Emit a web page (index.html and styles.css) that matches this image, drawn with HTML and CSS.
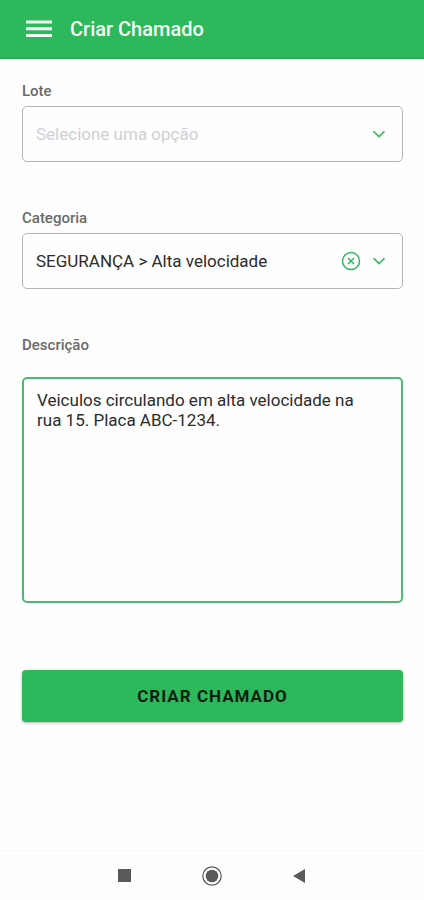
FILE: index.html
```html
<!DOCTYPE html>
<html lang="pt-BR">
<head>
    <meta charset="UTF-8">
    <meta name="viewport" content="width=device-width, initial-scale=1.0">
    <title>Criar Chamado</title>
    <link rel="stylesheet" href="styles.css">
</head>
<body>
    <header class="header">
        <button class="menu-button" type="button" aria-label="Menu">
            <svg width="26" height="18" viewBox="0 0 26 18" fill="currentColor">
                <path d="M0 0.5h26v3H0zM0 7.2h26v3H0zM0 14h26v3H0z"/>
            </svg>
        </button>
        <h1>Criar Chamado</h1>
    </header>

    <main class="content">
        <form class="ticket-form">
            <div class="field">
                <label for="lote">Lote</label>
                <div class="select-box">
                    <select id="lote" class="placeholder">
                        <option>Selecione uma opção</option>
                    </select>
                    <div class="select-icons">
                        <svg width="14" height="14" viewBox="0 0 14 14" fill="none" stroke="currentColor" stroke-width="1.6">
                            <path d="M1.5 4.2L7 9.6l5.5-5.4"/>
                        </svg>
                    </div>
                </div>
            </div>

            <div class="field">
                <label for="categoria">Categoria</label>
                <div class="select-box">
                    <select id="categoria">
                        <option>SEGURANÇA &gt; Alta velocidade</option>
                    </select>
                    <div class="select-icons">
                        <button class="clear-button" type="button" aria-label="Limpar">
                            <svg width="20" height="20" viewBox="0 0 20 20" fill="none" stroke="currentColor" stroke-width="1.5">
                                <circle cx="10" cy="10" r="8.5"/>
                                <path d="M7 7l6 6M13 7l-6 6"/>
                            </svg>
                        </button>
                        <svg width="14" height="14" viewBox="0 0 14 14" fill="none" stroke="currentColor" stroke-width="1.6">
                            <path d="M1.5 4.2L7 9.6l5.5-5.4"/>
                        </svg>
                    </div>
                </div>
            </div>

            <div class="field field-text">
                <label for="descricao">Descrição</label>
                <textarea id="descricao">Veiculos circulando em alta velocidade na rua 15. Placa ABC-1234.</textarea>
            </div>

            <button class="submit-button" type="submit">Criar Chamado</button>
        </form>
    </main>

    <nav class="system-bar">
        <button type="button" aria-label="Recentes">
            <svg width="20" height="20" viewBox="0 0 20 20" fill="currentColor">
                <rect x="4" y="3" width="13" height="13"/>
            </svg>
        </button>
        <button type="button" aria-label="Início">
            <svg width="20" height="20" viewBox="0 0 20 20" fill="currentColor">
                <circle cx="10" cy="10" r="9.2" fill="none" stroke="currentColor" stroke-width="1.2"/>
                <circle cx="10" cy="10" r="6.3"/>
            </svg>
        </button>
        <button type="button" aria-label="Voltar">
            <svg width="20" height="20" viewBox="0 0 20 20" fill="currentColor">
                <path d="M3 10l12-7v14z"/>
            </svg>
        </button>
    </nav>
</body>
</html>
```
FILE: styles.css
```css
* {
    margin: 0;
    padding: 0;
    box-sizing: border-box;
}

body {
    font-family: Roboto, sans-serif;
    background: #fefefe;
    color: #2c2c2c;
    min-height: 100vh;
    display: flex;
    flex-direction: column;
}

button {
    border: none;
    background: none;
    color: inherit;
    font-family: inherit;
    cursor: pointer;
}

svg {
    display: block;
}

.header {
    background: #2eb85c;
    color: #f2fff5;
    height: 59px;
    padding: 0 26px;
    display: flex;
    align-items: center;
    gap: 18px;
    border-bottom: 1px solid #27a551;
}

.header h1 {
    font-size: 20px;
    line-height: 24px;
    font-weight: 500;
}

.content {
    flex: 1;
    padding: 22px 21px 22px 22px;
}

.field {
    display: flex;
    flex-direction: column;
    gap: 5px;
    margin-bottom: 46px;
}

.field label {
    font-size: 15px;
    line-height: 20px;
    font-weight: 500;
    color: #6a6a6a;
}

.select-box {
    position: relative;
}

.select-box select {
    appearance: none;
    width: 100%;
    height: 56px;
    padding: 0 80px 0 13px;
    border: 1px solid #b4b4b4;
    border-radius: 5px;
    background: #fefefe;
    font-family: inherit;
    font-size: 17px;
    color: #2c2c2c;
}

.select-box select.placeholder {
    color: #cdd0d6;
}

/* Sits over the right side of the select */
.select-icons {
    position: absolute;
    top: 0;
    right: 17px;
    height: 100%;
    display: flex;
    align-items: center;
    gap: 11px;
    color: #2eb85c;
    pointer-events: none;
}

.clear-button {
    pointer-events: auto;
}

.field-text {
    gap: 22px;
    margin-bottom: 67px;
}

.field-text textarea {
    width: 100%;
    height: 226px;
    padding: 11px 24px 11px 13px;
    border: 2px solid #4dba74;
    border-radius: 5px;
    background: #fefefe;
    font-family: inherit;
    font-size: 17px;
    line-height: 20px;
    color: #2c2c2c;
    resize: none;
    outline: none;
}

.submit-button {
    width: 100%;
    height: 52px;
    border-radius: 4px;
    background: #2eb85c;
    color: #0b1f11;
    font-size: 17px;
    font-weight: 700;
    letter-spacing: 1px;
    text-transform: uppercase;
    box-shadow: 0 1px 3px rgba(0, 0, 0, 0.3);
}

.system-bar {
    height: 50px;
    border-top: 1px solid #f7f7f7;
    display: flex;
    justify-content: center;
    align-items: center;
    gap: 68px;
    color: #5a5a5a;
}
```
